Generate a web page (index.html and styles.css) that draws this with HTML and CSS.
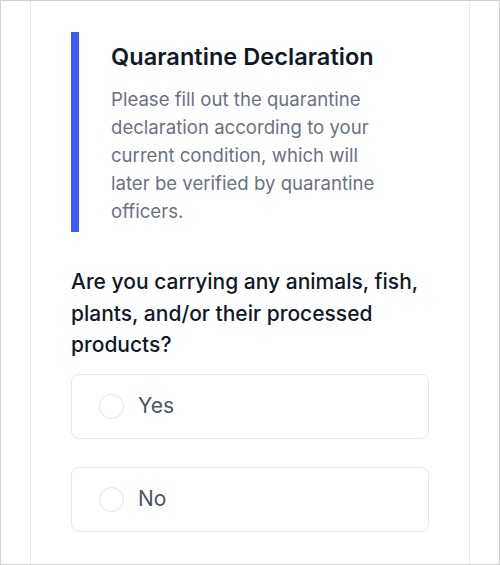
FILE: index.html
```html
<!DOCTYPE html>
<html lang="en">
<head>
<meta charset="utf-8">
<title>Quarantine Declaration</title>
<link rel="stylesheet" href="styles.css">
</head>
<body>
<div class="frame">
  <main class="panel">
    <section class="intro">
      <h1 class="intro-title">Quarantine Declaration</h1>
      <p class="intro-text">Please fill out the quarantine declaration according to your current condition, which will later be verified by quarantine officers.</p>
    </section>
    <div class="question" role="radiogroup" aria-labelledby="q1">
      <h2 class="question-text" id="q1">Are you carrying any animals, fish, plants, and/or their processed products?</h2>
      <div class="options">
        <label class="option">
          <input class="option-input" type="radio" name="carry" value="yes">
          <span class="radio"></span>
          <span class="option-label">Yes</span>
        </label>
        <label class="option">
          <input class="option-input" type="radio" name="carry" value="no">
          <span class="radio"></span>
          <span class="option-label">No</span>
        </label>
      </div>
    </div>
  </main>
</div>
</body>
</html>
```

FILE: styles.css
```css
* { box-sizing: border-box; }
html, body { margin: 0; padding: 0; }
body {
  font-family: Inter, "Noto Sans", sans-serif;
  background: #ffffff;
}
.frame {
  width: 500px;
  height: 565px;
  border: 1px solid #cfcfd1;
  background: #ffffff;
  overflow: hidden;
  padding-left: 29px;
}
.panel {
  width: 440px;
  height: 100%;
  border-left: 1px solid #e5e7eb;
  border-right: 1px solid #e5e7eb;
  padding: 31px 40px 0 40px;
}
.intro {
  border-left: 8px solid #3b5bfb;
  padding: 11px 0 7px 32px;
}
.intro-title {
  margin: 0;
  font-size: 23.5px;
  line-height: 28px;
  font-weight: 600;
  color: #111827;
  letter-spacing: 0.05px;
}
.intro-text {
  margin: 14px 0 0 0;
  max-width: 276px;
  font-size: 18.6px;
  line-height: 28px;
  color: #6b7280;
}
.question {
  margin-top: 34px;
}
.question-text {
  margin: 0 0 13px 0;
  font-size: 21px;
  line-height: 31.5px;
  font-weight: 500;
  color: #111827;
}
.options {
  display: flex;
  flex-direction: column;
  gap: 28px;
}
.option {
  display: flex;
  align-items: center;
  gap: 14px;
  height: 65px;
  padding-left: 27px;
  border: 1px solid #e5e7eb;
  border-radius: 8px;
  background: #ffffff;
}
.option-input {
  position: absolute;
  opacity: 0;
  width: 0;
  height: 0;
  margin: 0;
}
.radio {
  width: 25px;
  height: 25px;
  border: 1.5px solid #e2e4e9;
  border-radius: 50%;
  background: #ffffff;
  flex: none;
}
.option-label {
  font-size: 21px;
  line-height: 28px;
  color: #4b5563;
}
```
